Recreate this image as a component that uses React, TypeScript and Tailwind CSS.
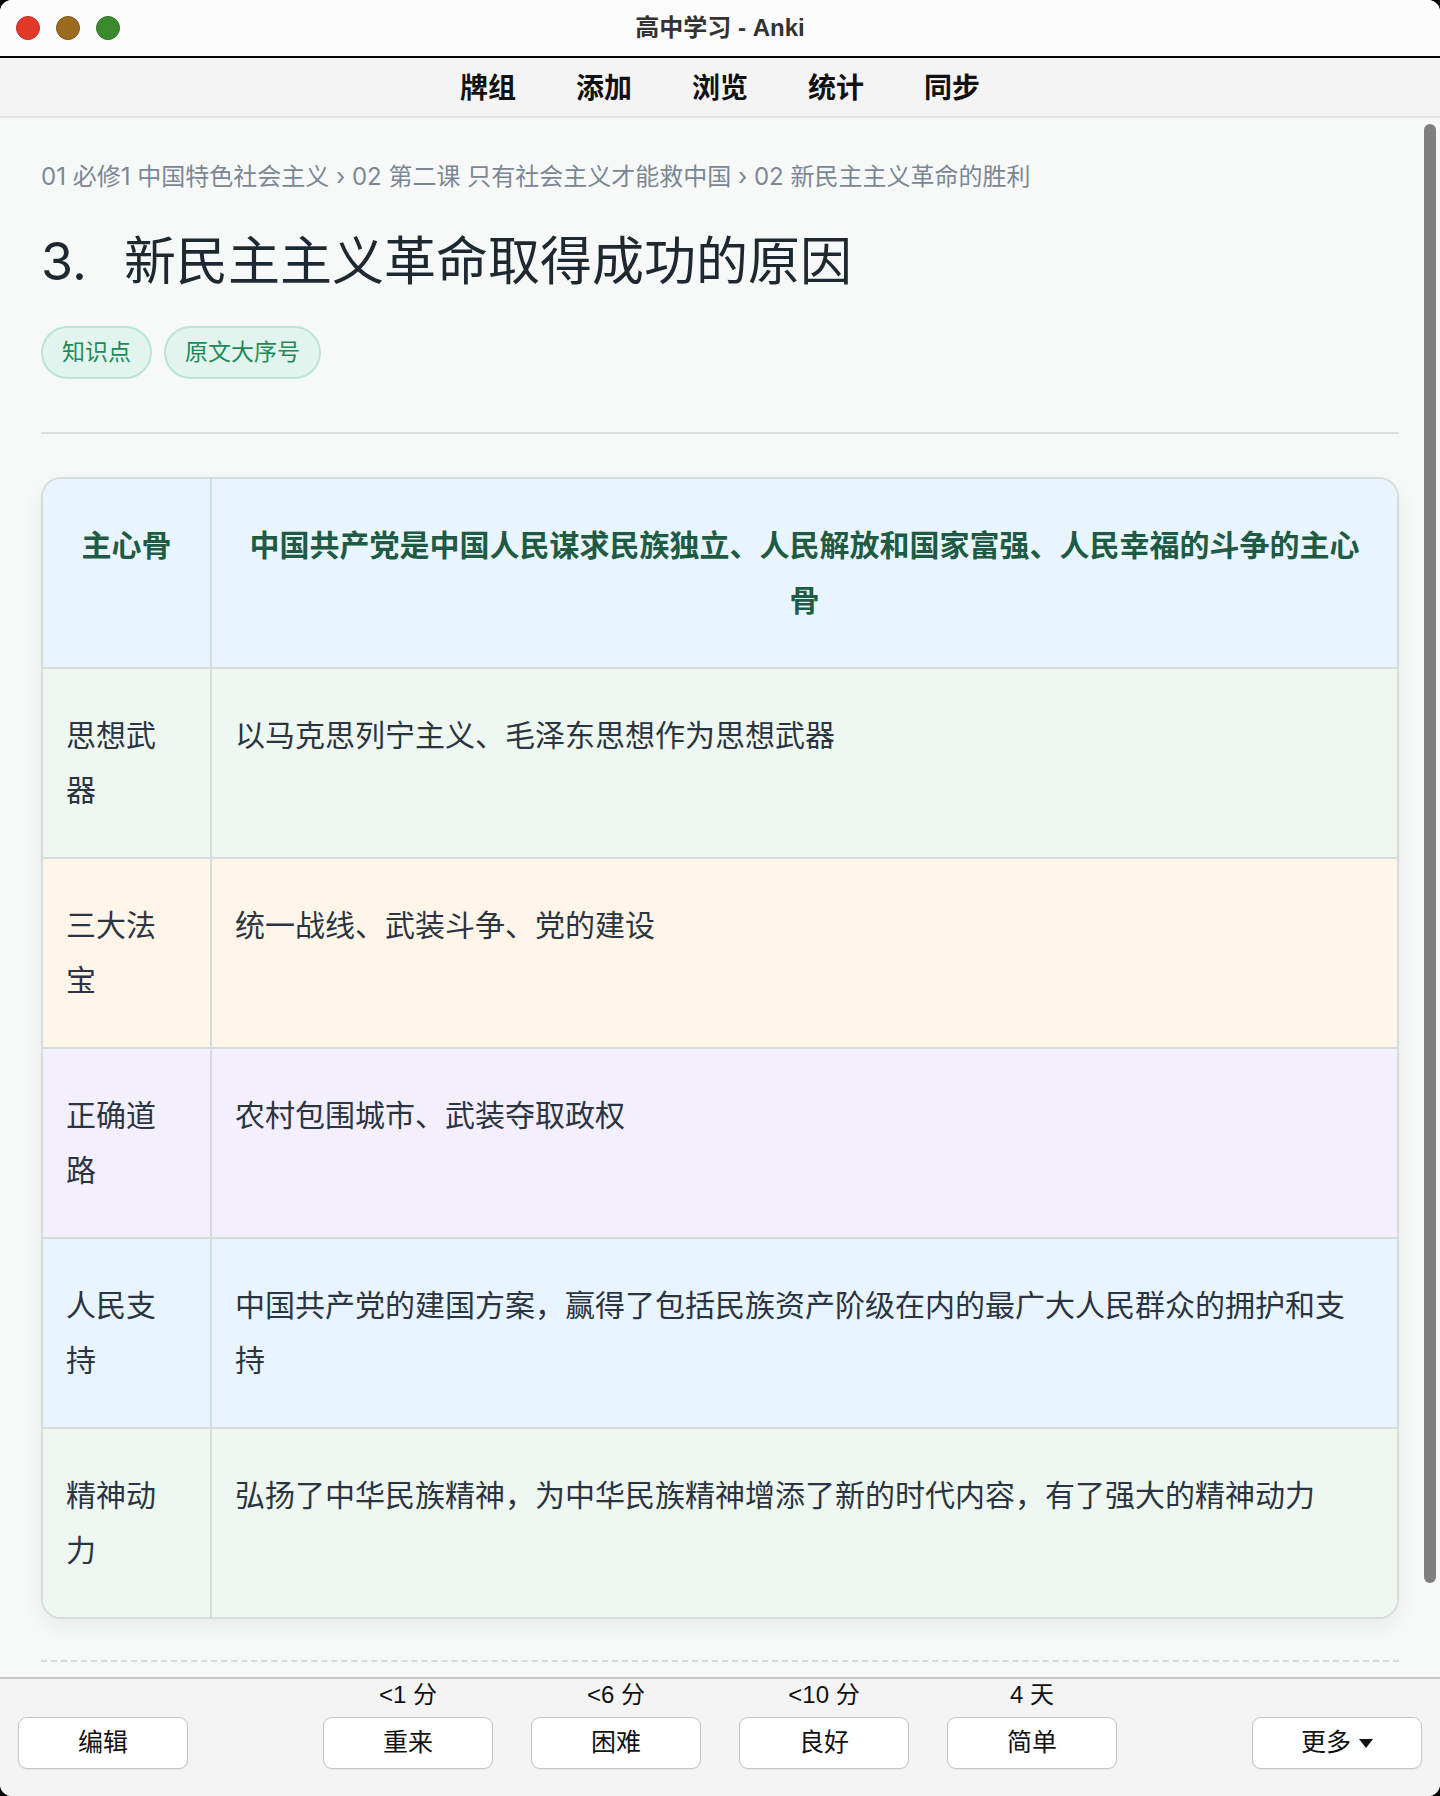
import React from 'react'

const chrome = "font-['Liberation_Sans','Noto_Sans_CJK_SC',sans-serif]"
const page = "font-['Inter','Noto_Sans_CJK_SC',sans-serif]"

const rows = [
    { label: '思想武器', text: '以马克思列宁主义、毛泽东思想作为思想武器', bg: 'bg-[#eef8f1]' },
    { label: '三大法宝', text: '统一战线、武装斗争、党的建设', bg: 'bg-[#fff6e9]' },
    { label: '正确道路', text: '农村包围城市、武装夺取政权', bg: 'bg-[#f3effd]' },
    { label: '人民支持', text: '中国共产党的建国方案，赢得了包括民族资产阶级在内的最广大人民群众的拥护和支持', bg: 'bg-[#e8f5fe]' },
    { label: '精神动力', text: '弘扬了中华民族精神，为中华民族精神增添了新的时代内容，有了强大的精神动力', bg: 'bg-[#eef8f1]' },
]

const answers = [
    { due: '<1 分', label: '重来' },
    { due: '<6 分', label: '困难' },
    { due: '<10 分', label: '良好' },
    { due: '4 天', label: '简单' },
]

function Btn({ children }: { children: React.ReactNode }) {
    return (
        <button className="flex h-[52px] w-[170px] items-center justify-center gap-[8px] rounded-[9px] border-[1.5px] border-[#c6c6c6] bg-white text-[25px] text-[#111] shadow-[0_1px_1px_rgba(0,0,0,0.06)]">
            {children}
        </button>
    )
}

function TitleBar() {
    return (
        <div className="grid h-[58px] grid-cols-[1fr_auto_1fr] items-center border-b-2 border-black bg-[#fcfcfc]">
            <div className="flex items-center gap-[16px] pl-[16px]">
                <span className="h-[24px] w-[24px] rounded-full border border-[#c22c1f] bg-[#e1392a]" />
                <span className="h-[24px] w-[24px] rounded-full border border-[#7f5717] bg-[#9b6b20]" />
                <span className="h-[24px] w-[24px] rounded-full border border-[#2f7222] bg-[#3b8b2c]" />
            </div>
            <div className="text-[24px] font-semibold text-[#333]">高中学习 - Anki</div>
            <div />
        </div>
    )
}

function Toolbar() {
    const items = ['牌组', '添加', '浏览', '统计', '同步']
    return (
        <div className="flex h-[60px] items-center justify-center gap-[60px] border-b-2 border-[#e3e3e3] bg-[#f4f4f4] pt-[4px]">
            {items.map((it) => (
                <span key={it} className="text-[28px] font-bold text-[#111]">{it}</span>
            ))}
        </div>
    )
}

function CardTable() {
    return (
        <div className="mt-[43px] overflow-hidden rounded-[20px] border-2 border-[#d4dddc] shadow-[0_8px_24px_rgba(0,0,0,0.06)]">
            {/* Header */}
            <div className="flex border-b-2 border-[#d4dddc] bg-[#e8f5fe] text-[30px] font-bold leading-[55px] text-[#1f5a43]">
                <div className="w-[169px] shrink-0 border-r-2 border-[#d4dddc] py-[39px] text-center">主心骨</div>
                <div className="flex-1 px-[23px] py-[39px] text-center">
                    中国共产党是中国人民谋求民族独立、人民解放和国家富强、人民幸福的斗争的主心骨
                </div>
            </div>
            {rows.map((r, i) => (
                <div
                    key={r.label}
                    className={`flex text-[30px] leading-[55px] text-[#2b3440] ${r.bg} ${i < rows.length - 1 ? 'border-b-2 border-[#d4dddc]' : ''}`}
                >
                    <div className="w-[169px] shrink-0 border-r-2 border-[#d4dddc] py-[39px] pl-[23px] pr-[25px]">{r.label}</div>
                    <div className="flex-1 px-[23px] py-[39px]">{r.text}</div>
                </div>
            ))}
        </div>
    )
}

function BottomBar() {
    return (
        <div className={`flex h-[119px] items-end justify-between border-t-2 border-[#c8c8c8] bg-[#f4f4f4] px-[18px] pb-[27px] ${chrome}`}>
            <Btn>编辑</Btn>
            <div className="flex gap-[38px]">
                {answers.map((a) => (
                    <div key={a.label} className="flex flex-col items-center">
                        <span className="mb-[6px] text-[24px] leading-[32px] text-[#111]">{a.due}</span>
                        <Btn>{a.label}</Btn>
                    </div>
                ))}
            </div>
            <Btn>
                更多
                <svg width="14" height="9" viewBox="0 0 14 9"><path d="M0 0h14L7 9z" fill="#111" /></svg>
            </Btn>
        </div>
    )
}

export default function App() {
    return (
        <div className="h-[1796px] w-[1440px] bg-black">
            <div className={`flex h-full flex-col overflow-hidden rounded-[12px] bg-[#f7f9f9] ${chrome}`}>
                <TitleBar />
                <Toolbar />

                {/* Card content */}
                <div className={`relative flex-1 overflow-hidden px-[41px] pt-[41px] ${page}`}>
                    <div className="text-[24px] leading-[36px] text-[#7b8794]">
                        01 必修1 中国特色社会主义 › 02 第二课 只有社会主义才能救中国 › 02 新民主主义革命的胜利
                    </div>
                    <h1 className="mt-[33px] flex text-[52px] font-normal leading-[68px] text-[#1d2830]">
                        <span className="w-[83px]">3.</span>
                        <span>新民主主义革命取得成功的原因</span>
                    </h1>
                    <div className="mt-[30px] flex gap-[12px]">
                        <span className="flex h-[53px] items-center rounded-full border-2 border-[#b9e5d3] bg-[#e1f5ee] px-[19px] text-[23px] text-[#1e8a5a]">知识点</span>
                        <span className="flex h-[53px] items-center rounded-full border-2 border-[#b9e5d3] bg-[#e1f5ee] px-[19px] text-[23px] text-[#1e8a5a]">原文大序号</span>
                    </div>
                    <div className="mt-[53px] h-[2px] bg-[#d9dfdf]" />

                    <CardTable />

                    <div className="mt-[41px] border-t-2 border-dashed border-[#d5dada]" />

                    {/* Scrollbar thumb */}
                    <div className="absolute right-[4px] top-[6px] h-[1459px] w-[12px] rounded-full bg-[#7f7f7f]" />
                </div>

                <BottomBar />
            </div>
        </div>
    )
}
